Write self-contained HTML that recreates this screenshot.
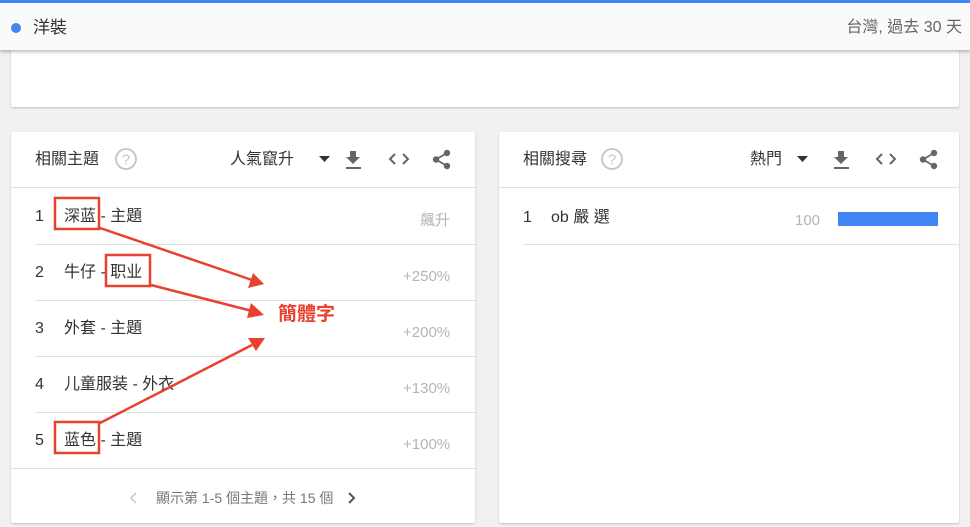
<!DOCTYPE html>
<html><head><meta charset="utf-8"><style>
*{margin:0;padding:0;box-sizing:border-box}
body{width:970px;height:527px;overflow:hidden;background:#f1f1f1;font-family:"Liberation Sans","Noto Sans CJK TC",sans-serif;position:relative;color:#333}
.topbar{position:absolute;left:0;top:0;width:970px;height:3px;background:#4285f4}
.hdr{position:absolute;left:0;top:3px;width:970px;height:47px;background:#fafafa;box-shadow:0 2px 3px rgba(0,0,0,.25);z-index:2}
.dot{position:absolute;left:11px;top:20px;width:10px;height:10px;border-radius:50%;background:#4285f4}
.card{position:absolute;background:#fff;box-shadow:0 1px 2px rgba(0,0,0,.2);border-radius:2px}
.t{position:absolute;white-space:nowrap;line-height:20px}
.line{position:absolute;height:1px;background:#e0e0e0}
.gray{color:#b4b4b4}
.r{font-size:16px}
</style></head><body>
<div class="topbar"></div>
<div class="hdr"><div class="dot"></div>
<div class="t" style="left:33px;top:15px;font-size:17px">洋裝</div>
<div class="t" style="right:8px;top:15px;font-size:16px;color:#666">台灣, 過去 30 天</div></div>
<div class="card" style="left:11px;top:40px;width:948px;height:67px"></div>

<div class="card" style="left:11px;top:132px;width:464px;height:391px">
<div class="t" style="left:24px;top:18px;font-size:16px">相關主題</div>
<svg class="t" style="left:103px;top:15px" width="24" height="24" viewBox="0 0 24 24"><circle cx="12" cy="12" r="10" fill="none" stroke="#c4c4c4" stroke-width="1.8"/><text x="12" y="17.5" font-size="15" text-anchor="middle" fill="#c4c4c4" font-family="Liberation Sans">?</text></svg>
<div class="t" style="left:219px;top:18px;font-size:16px">人氣竄升</div>
<svg class="t" style="left:308px;top:24px" width="12" height="7"><path d="M0 0h11L5.5 6z" fill="#333"/></svg>
<svg class="t" style="left:334px;top:18px" width="17" height="20"><path d="M5 1h6v6h4l-7 7-7-7h4z" fill="#666"/><rect x="1" y="17" width="15" height="2" fill="#666"/></svg>
<svg class="t" style="left:377px;top:20px" width="22" height="14"><path d="M7 2L2 7l5 5M15 2l5 5-5 5" fill="none" stroke="#666" stroke-width="2"/></svg>
<svg class="t" style="left:421px;top:17px" width="20" height="21"><circle cx="15" cy="4" r="3.2" fill="#666"/><circle cx="4" cy="10.5" r="3.2" fill="#666"/><circle cx="15" cy="17" r="3.2" fill="#666"/><path d="M15 4L4 10.5 15 17" stroke="#666" stroke-width="1.8" fill="none"/></svg>
<div class="line" style="left:0;top:55px;width:464px"></div>
</div>

<div class="card" style="left:499px;top:132px;width:460px;height:391px">
<div class="t" style="left:24px;top:18px;font-size:16px">相關搜尋</div>
<svg class="t" style="left:101px;top:15px" width="24" height="24" viewBox="0 0 24 24"><circle cx="12" cy="12" r="10" fill="none" stroke="#c4c4c4" stroke-width="1.8"/><text x="12" y="17.5" font-size="15" text-anchor="middle" fill="#c4c4c4" font-family="Liberation Sans">?</text></svg>
<div class="t" style="left:251px;top:18px;font-size:16px">熱門</div>
<svg class="t" style="left:298px;top:24px" width="12" height="7"><path d="M0 0h11L5.5 6z" fill="#333"/></svg>
<svg class="t" style="left:334px;top:18px" width="17" height="20"><path d="M5 1h6v6h4l-7 7-7-7h4z" fill="#666"/><rect x="1" y="17" width="15" height="2" fill="#666"/></svg>
<svg class="t" style="left:376px;top:20px" width="22" height="14"><path d="M7 2L2 7l5 5M15 2l5 5-5 5" fill="none" stroke="#666" stroke-width="2"/></svg>
<svg class="t" style="left:420px;top:17px" width="20" height="21"><circle cx="15" cy="4" r="3.2" fill="#666"/><circle cx="4" cy="10.5" r="3.2" fill="#666"/><circle cx="15" cy="17" r="3.2" fill="#666"/><path d="M15 4L4 10.5 15 17" stroke="#666" stroke-width="1.8" fill="none"/></svg>
<div class="line" style="left:0;top:55px;width:460px"></div>
<div class="t r" style="left:24px;top:76px">1</div><div class="t r" style="left:52px;top:76px">ob 嚴 選</div>
<div class="t gray" style="left:296px;top:79px;font-size:15px">100</div>
<div style="position:absolute;left:339px;top:80px;width:100px;height:14px;background:#4285f4"></div>
<div class="line" style="left:24px;top:112px;width:436px"></div>
</div>

<div class="t r" style="left:35px;top:207px">1</div><div class="t r" style="left:64px;top:207px">深蓝 - 主題</div><div class="t gray" style="left:420px;top:211px;font-size:15px">飆升</div>
<div class="line" style="left:35px;top:244px;width:440px"></div>
<div class="t r" style="left:35px;top:263px">2</div><div class="t r" style="left:64px;top:263px">牛仔 - 职业</div><div class="t gray" style="left:403px;top:267px;font-size:15px">+250%</div>
<div class="line" style="left:35px;top:300px;width:440px"></div>
<div class="t r" style="left:35px;top:319px">3</div><div class="t r" style="left:64px;top:319px">外套 - 主題</div><div class="t gray" style="left:403px;top:323px;font-size:15px">+200%</div>
<div class="line" style="left:35px;top:356px;width:440px"></div>
<div class="t r" style="left:35px;top:375px">4</div><div class="t r" style="left:64px;top:375px">儿童服装 - 外衣</div><div class="t gray" style="left:403px;top:379px;font-size:15px">+130%</div>
<div class="line" style="left:35px;top:412px;width:440px"></div>
<div class="t r" style="left:35px;top:431px">5</div><div class="t r" style="left:64px;top:431px">蓝色 - 主題</div><div class="t gray" style="left:403px;top:435px;font-size:15px">+100%</div>
<div class="line" style="left:11px;top:468px;width:464px"></div>
<svg class="t" style="left:129px;top:491px" width="10" height="14"><path d="M7 2L2 7l5 5" fill="none" stroke="#ccc" stroke-width="1.6"/></svg>
<div class="t" style="left:156px;top:488px;font-size:14px;color:#777">顯示第 1-5 個主題，共 15 個</div>
<svg class="t" style="left:347px;top:491px" width="10" height="14"><path d="M2 2l5 5-5 5" fill="none" stroke="#555" stroke-width="2"/></svg>

<svg style="position:absolute;left:0;top:0" width="970" height="527">
<g fill="none" stroke="#e8412e" stroke-width="2.5">
<rect x="55" y="198" width="44" height="31"/>
<rect x="106" y="255" width="44" height="31"/>
<rect x="55" y="422" width="44" height="31"/>
<path d="M100 228L252 280M151 285L252 311M100 423L252 345"/>
</g>
<g fill="#e8412e">
<path d="M264 284L248 288L253 273z"/>
<path d="M264 315L247 318L251 303z"/>
<path d="M265 338L256 351L248 338z"/>
</g>
<text x="278" y="320" font-size="19" font-weight="bold" fill="#e8412e" font-family="Liberation Sans,Noto Sans CJK TC,sans-serif">簡體字</text>
</svg>
</body></html>
